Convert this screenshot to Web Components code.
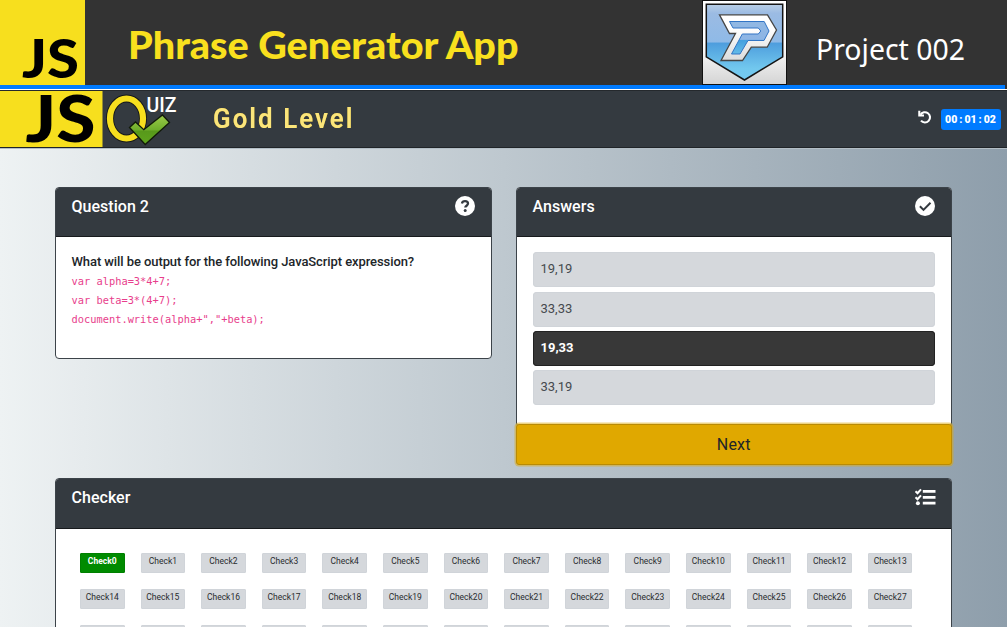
<!DOCTYPE html>
<html lang="en">
<head>
<meta charset="utf-8">
<title>JS Quiz</title>
<style>
html,body{margin:0;height:627px;overflow:hidden}
body{font-family:Roboto,"Liberation Sans",sans-serif;background:#8e9eab}
</style>
</head>
<body>
<quiz-app></quiz-app>
<script>
const define=(name,html)=>customElements.define(name,class extends HTMLElement{
  constructor(){super();this.attachShadow({mode:'open'}).innerHTML=typeof html==='function'?html(this):html}
});

/* Single line of text stretched to a set width */
define('fit-text',el=>{
  const g=n=>el.getAttribute(n);
  return `<style>:host{display:block}svg{display:block;overflow:visible}text{font:${g('weight')} ${g('size')}px ${g('family')},sans-serif;fill:${g('fill')};letter-spacing:${g('spacing')||0}px}</style>
  <svg width="${g('width')}" height="${g('height')}"><text x="0" y="${g('base')}" textLength="${g('width')}" lengthAdjust="spacingAndGlyphs">${el.getAttribute('label')}</text></svg>`});

define('js-logo',el=>{
  const big=el.hasAttribute('wide');
  return `<style>:host{display:block;flex:none}svg{display:block;overflow:visible}text{font:900 ${big?65:54}px Lato,sans-serif;fill:#000}</style>`+
  (big?`<svg width="103" height="56"><rect width="102.500" height="56" fill="#f7df1e"/><text x="25.500" y="51" textLength="70" lengthAdjust="spacingAndGlyphs">JS</text></svg>`
  :`<svg width="85" height="85"><rect width="85" height="85" fill="#f7df1e"/><text x="22" y="77.500" textLength="57" lengthAdjust="spacingAndGlyphs">JS</text></svg>`)});

define('quiz-mark',`<style>:host{display:block;flex:none}svg{display:block;overflow:visible}text{font:500 19.500px Roboto,sans-serif;fill:#fff}</style>
<svg width="76" height="56">
<defs><linearGradient id="g" x2="0" y2="1"><stop offset="0" stop-color="#9ccb4b"/><stop offset=".5" stop-color="#6fae2b"/><stop offset=".55" stop-color="#58991b"/><stop offset="1" stop-color="#5fa51d"/></linearGradient></defs>
<ellipse cx="23.500" cy="27.500" rx="16.500" ry="20" fill="none" stroke="#15181a" stroke-width="8"/>
<ellipse cx="23.500" cy="27.500" rx="16.500" ry="20" fill="none" stroke="#f7df1e" stroke-width="6.200"/>
<path d="M26.500 36.500l6-5.500 8.300 7.700L59.500 24l7 7.500L42.200 53.500z" fill="url(#g)" stroke="#111a09" stroke-width="1.300"/>
<text x="43.500" y="21" textLength="30" lengthAdjust="spacingAndGlyphs">UIZ</text></svg>`);

define('shield-logo',`<style>:host{display:block;flex:none}svg{display:block}</style>
<svg width="85" height="85" viewBox="0 0 85 85"><defs>
<linearGradient id="w" x2="0" y2="1"><stop offset=".5" stop-color="#fff"/><stop offset="1" stop-color="#d4d4d4"/></linearGradient>
<linearGradient id="b" x2="0" y2="1"><stop offset="0" stop-color="#b9cfe6"/><stop offset=".12" stop-color="#9bbbe3"/><stop offset=".5" stop-color="#8fbae7"/><stop offset=".51" stop-color="#4d9ddd"/><stop offset=".85" stop-color="#72c8ee"/><stop offset="1" stop-color="#75c9ef"/></linearGradient>
<linearGradient id="p" x2="0" y2="1"><stop offset=".3" stop-color="#fff"/><stop offset="1" stop-color="#dcdcdc"/></linearGradient>
<linearGradient id="i" x2="0" y2="1"><stop offset="0" stop-color="#91b8e3"/><stop offset=".55" stop-color="#8db5e5"/><stop offset=".58" stop-color="#44a0df"/><stop offset="1" stop-color="#64bbe8"/></linearGradient></defs>
<rect x=".5" y=".5" width="84" height="84" fill="url(#w)" stroke="#111"/>
<path d="M4.300 4.300h76.400v52.500L42.500 80 4.300 56.800z" fill="url(#b)" stroke="#151515" stroke-width="1.500"/>
<path d="M17.500 14.800h48L74.500 30l-9.300 17.200H49.300L40.500 60.500H19L33.500 33.500H27.500z" fill="url(#p)" stroke="#454545" stroke-width="1.300"/>
<path d="M27.500 21.500h34.700L67 31l-5 9.500H46L38 54H29.500l10.800-20h16l2.500-3-2.500-3H31z" fill="url(#i)" stroke="#3275c5" stroke-width="1"/></svg>`);

define('app-banner',`<style>:host{display:block;background:#fff;height:90px}
.bar{display:flex;height:85px;background:#333}.title{margin:16px 0 0 43px}.shield{margin-left:183.500px}.proj{margin:24px 0 0 29px}
.progress{height:4px;width:1005px;background:#007bff}.edge{background:#333;height:4px}</style>
<div class="bar"><js-logo></js-logo><fit-text class="title" label="Phrase Generator App" width="390.500" height="56" size="38.500" weight="900" base="42.500" family="Lato" fill="#f9e01e"></fit-text><shield-logo class="shield"></shield-logo>
<fit-text class="proj" label="Project 002" width="149" height="45" size="28.500" weight="400" base="36" family="'Noto Sans'" fill="#fff"></fit-text></div>
<div class="edge"><div class="progress"></div></div>`);

define('quiz-nav',`<style>:host{display:flex;height:58px;box-sizing:border-box;background:#343a40;border-top:1px solid #25292d;border-bottom:1px solid #202428}
.level{margin:11px 0 0 34px;filter:drop-shadow(0 0 .6px #9b7d12)}.right{margin-left:auto;display:flex;align-items:flex-start;padding-right:6.500px}
svg{display:block;margin:19px 9px 0 0}.timer{display:flex;justify-content:center;gap:2px;margin-top:17.500px;width:60px;height:21.500px;border-radius:3px;background:#007bff;color:#fff;font-size:10.500px;font-weight:900;line-height:21px;white-space:nowrap}</style>
<js-logo wide></js-logo><quiz-mark></quiz-mark>
<fit-text class="level" label="Gold Level" width="141.500" height="40" size="28" weight="600" base="26" spacing="2.200" family="Roboto" fill="#fbe57b"></fit-text>
<div class="right"><svg width="14" height="14" viewBox="0 0 14 14" fill="none" stroke="#fff" stroke-width="2.100"><path d="M2.500 4.800A5.100 5.100 0 1 1 3 10.600"/><path d="M1.300.8v4.700H6" /></svg><div class="timer"><span>00</span><span>:</span><span>01</span><span>:</span><span>02</span></div></div>`);

const icons={
question:'<circle cx="10" cy="10" r="10" fill="#fff"/><path d="M6.900 7.500C7.300 5.700 8.500 5.100 10 5.100c1.700 0 3 .9 3 2.500 0 2.100-2.700 2.100-2.700 4" fill="none" stroke="#343a40" stroke-width="2.300"/><circle cx="10.200" cy="14.600" r="1.500" fill="#343a40"/>',
check:'<circle cx="10" cy="10" r="10" fill="#fff"/><path d="M4.900 10.300l3.600 3.600 7-7.200" fill="none" stroke="#343a40" stroke-width="2"/>',
tasks:'<g fill="none" stroke="#fff"><path d="M7.800 4.300h12.700M7.800 10.300h12.700M7.800 16.200h12.700" stroke-width="2.700"/><path d="M.5 4.300l2 1.900 3.500-3.900M.5 10.300l2 1.900 3.500-3.900" stroke-width="2"/></g><circle cx="2.900" cy="16.200" r="2" fill="#fff"/>'};
define('quiz-card',el=>`<style>:host{display:block;box-sizing:border-box;border:1px solid #3c4349;border-radius:4px;background:#fff;overflow:hidden}
header{display:flex;justify-content:space-between;box-sizing:border-box;height:var(--head,49px);padding:8px 16px 0;background:#343a40;border-bottom:1px solid #171a1d;color:#fff;font-size:16px;font-weight:500;line-height:21px;letter-spacing:.03px}
svg{display:block;overflow:visible;margin-top:.3px}</style>
<header><span>${el.getAttribute('heading')}</span><svg width="20" height="20" viewBox="0 0 20 20">${icons[el.getAttribute('icon')]}</svg></header><slot></slot>`);

define('question-text',`<style>:host{display:block;padding:15px 16px}p{margin:0;font-size:13px;font-weight:500;line-height:20px;letter-spacing:-.085px;color:#212529}
pre{margin:0;font:400 10.370px/19px "DejaVu Sans Mono",monospace;color:#e83e8c}</style>
<p>What will be output for the following JavaScript expression?</p><pre>var alpha=3*4+7;
var beta=3*(4+7);
document.write(alpha+","+beta);</pre>`);

define('answer-option',`<style>:host{display:block;box-sizing:border-box;height:35px;padding:0 8px;border-radius:4px;background:#d5d8dc;box-shadow:inset 0 0 0 1px #d0d4d9;color:#464a4e;font-size:13px;line-height:34.500px}
:host([selected]){background:#383838;box-shadow:inset 0 0 0 1px #222;color:#fff;font-weight:700}</style><slot></slot>`);

define('next-button',`<style>:host{display:block;box-sizing:border-box;height:41px;background:#e0a800;border:1px solid #b98b05;border-radius:3px;box-shadow:0 0 0 1.500px rgba(222,170,12,.5);text-align:center;color:#212529;font-size:16px;line-height:40px;letter-spacing:.2px}</style><slot></slot>`);

define('check-item',`<style>:host{display:block;box-sizing:border-box;height:20px;background:#d5d8dc;border:1px solid #d0d4d9;border-radius:1px;color:#292c2f;text-align:center;font-size:8.500px;line-height:15px}
:host([done]){background:#008b00;border-color:#008000;color:#fff;font-weight:700}</style><slot></slot>`);

define('check-grid',()=>`<style>:host{display:grid;grid-template-columns:repeat(14,44.500px);column-gap:16.120px;grid-auto-rows:20px;row-gap:16.300px;padding:23.600px 0 0 24.500px}</style>`+
Array.from({length:42},(_,i)=>`<check-item${i?'':' done'}>${i<28?'Check'+i:''}</check-item>`).join(''));

define('quiz-app',`<style>:host{display:flex;flex-direction:column;width:1007px;height:627px;overflow:hidden}
main{flex:1;min-height:0;box-sizing:border-box;padding:38px 55px 0 54.500px;background:linear-gradient(90deg,#eef2f3 0%,#8e9eab 100%);border-top:1px solid #b3bec6}
.top{display:grid;grid-template-columns:437px 436.500px;column-gap:24px;align-items:start;height:291px}
.q{height:171.500px}.ans{height:240px}.list{display:grid;row-gap:4.330px;padding:15.300px 16px}
.next{position:relative;margin-top:-3px}.checks{height:240px;--head:50px}</style>
<app-banner></app-banner><quiz-nav></quiz-nav>
<main><div class="top"><quiz-card class="q" heading="Question 2" icon="question"><question-text></question-text></quiz-card>
<div><quiz-card class="ans" heading="Answers" icon="check"><div class="list"><answer-option>19,19</answer-option><answer-option>33,33</answer-option><answer-option selected>19,33</answer-option><answer-option>33,19</answer-option></div></quiz-card><next-button class="next">Next</next-button></div></div>
<quiz-card class="checks" heading="Checker" icon="tasks"><check-grid></check-grid></quiz-card></main>`);
</script>
</body>
</html>
